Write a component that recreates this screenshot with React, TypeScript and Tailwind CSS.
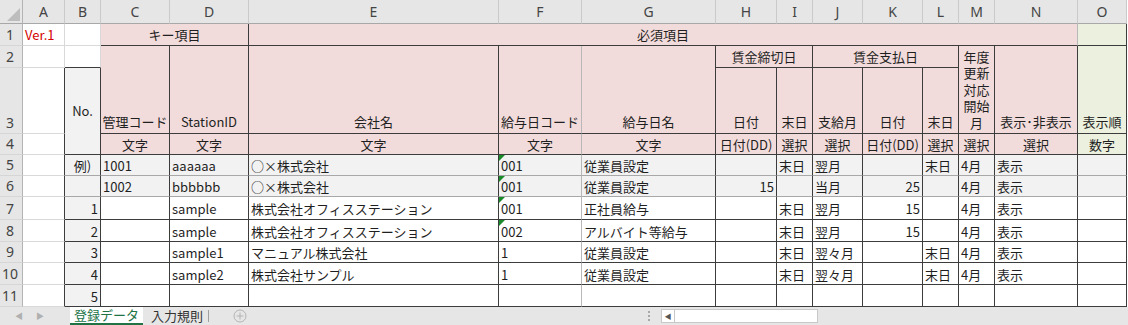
import React from "react";

// border colours: dark rule, sheet gridline, soft rule
const R = { d: "border-r-[#3c3c3c]", l: "border-r-[#d9d9d9]", g: "border-r-[#b8b8b8]" };
const B = { d: "border-b-[#3c3c3c]", l: "border-b-[#d9d9d9]", g: "border-b-[#a8a8a8]" };

type Side = "d" | "l" | "g";

function Cell({
  r = "d",
  b = "d",
  className = "",
  children,
}: {
  r?: Side;
  b?: Side;
  className?: string;
  children?: React.ReactNode;
}) {
  return (
    <div
      className={`relative flex min-w-0 overflow-hidden whitespace-nowrap border-r border-b px-[2px] text-[13px] text-[#1f1f1f] ${R[r]} ${B[b]} ${className}`}
    >
      {children}
    </div>
  );
}

const letters = ["A", "B", "C", "D", "E", "F", "G", "H", "I", "J", "K", "L", "M", "N", "O"];

// columns C..O for rows 5-11, B handled separately
const rows: { no: number; b: string; vals: string[] }[] = [
  { no: 5, b: "例)", vals: ["1001", "aaaaaa", "○×株式会社", "001", "従業員設定", "", "末日", "翌月", "", "末日", "4月", "表示", ""] },
  { no: 6, b: "", vals: ["1002", "bbbbbb", "○×株式会社", "001", "従業員設定", "15", "", "当月", "25", "", "4月", "表示", ""] },
  { no: 7, b: "1", vals: ["", "sample", "株式会社オフィスステーション", "001", "正社員給与", "", "末日", "翌月", "15", "", "4月", "表示", ""] },
  { no: 8, b: "2", vals: ["", "sample", "株式会社オフィスステーション", "002", "アルバイト等給与", "", "末日", "翌月", "15", "", "4月", "表示", ""] },
  { no: 9, b: "3", vals: ["", "sample1", "マニュアル株式会社", "1", "従業員設定", "", "末日", "翌々月", "", "末日", "4月", "表示", ""] },
  { no: 10, b: "4", vals: ["", "sample2", "株式会社サンプル", "1", "従業員設定", "", "末日", "翌々月", "", "末日", "4月", "表示", ""] },
  { no: 11, b: "5", vals: ["", "", "", "", "", "", "", "", "", "", "", "", ""] },
];

// Excel puts the row number at the bottom of a tall row
function RowHead({ n }: { n: number | string }) {
  return (
    <div className="flex items-end justify-center border-r border-b border-r-[#b4b4b4] border-b-[#d6d6d6] bg-[#e6e6e6] pr-[2px] pb-[1px] font-['Noto_Sans',sans-serif] text-[14px] leading-[19px] text-[#444]">
      {n}
    </div>
  );
}

function Flag() {
  return (
    <svg className="absolute left-0 top-0" width="6" height="6" viewBox="0 0 6 6">
      <polygon points="0,0 6,0 0,6" fill="#1b8a2a" />
    </svg>
  );
}

export default function App() {
  return (
    <div className="h-[325px] w-[1128px] overflow-hidden bg-white font-['Noto_Sans_CJK_JP','Noto_Sans',sans-serif]">
      <div className="grid grid-cols-[23px_42px_36px_69px_79px_250px_83px_134px_61px_36px_50px_60px_36px_36px_83px_49px] grid-rows-[24px_22px_22px_66px_21px_21px_21px_23px_22px_21px_22px_22px] leading-none">
        {/* column header strip */}
        <div className="relative border-r border-b border-r-[#b4b4b4] border-b-[#a8a8a8] bg-[#e6e6e6]">
          <svg className="absolute left-0 top-0" width="23" height="24" viewBox="0 0 23 24">
            <polygon points="20,8 20,21 7,21" fill="#bdbdbd" />
          </svg>
        </div>
        {letters.map((l) => (
          <div
            key={l}
            className="flex items-center justify-center border-r border-b border-r-[#cacaca] border-b-[#a8a8a8] bg-[#e6e6e6] font-['Noto_Sans',sans-serif] text-[14px] text-[#444]"
          >
            {l}
          </div>
        ))}

        {/* row 1 */}
        <RowHead n={1} />
        <Cell r="l" b="l" className="items-center text-[#d40000]">
          Ver.1
        </Cell>
        <Cell r="l" b="l" />
        <Cell className="col-span-2 items-center justify-center bg-[#f2dcdb]">キー項目</Cell>
        <Cell r="g" className="col-span-10 items-center justify-center bg-[#f2dcdb]">
          必須項目
        </Cell>
        <Cell className="bg-[#ebf1de]" />

        {/* row 2 */}
        <RowHead n={2} />
        <Cell r="l" b="l" />
        <Cell r="l" b="d" />
        <Cell className="row-span-2 items-end justify-center bg-[#f2dcdb] pb-[5px]">管理コード</Cell>
        <Cell className="row-span-2 items-end justify-center bg-[#f2dcdb] pb-[5px]">StationID</Cell>
        <Cell className="row-span-2 items-end justify-center bg-[#f2dcdb] pb-[5px]">会社名</Cell>
        <Cell r="g" className="row-span-2 items-end justify-center bg-[#f2dcdb] pb-[5px]">
          給与日コード
        </Cell>
        <Cell className="row-span-2 items-end justify-center bg-[#f2dcdb] pb-[5px]">給与日名</Cell>
        <Cell className="col-span-2 items-center justify-center bg-[#f2dcdb]">賃金締切日</Cell>
        <Cell className="col-span-3 items-center justify-center bg-[#f2dcdb]">賃金支払日</Cell>
        <Cell className="row-span-2 items-end justify-center bg-[#f2dcdb] pb-[2px]">
          <span className="block text-center leading-[16.5px] whitespace-normal">
            年度
            <br />
            更新
            <br />
            対応
            <br />
            開始
            <br />月
          </span>
        </Cell>
        <Cell className="row-span-2 items-end justify-center bg-[#f2dcdb] pb-[5px]">表示･非表示</Cell>
        <Cell className="row-span-2 items-end justify-center bg-[#ebf1de] pb-[5px]">表示順</Cell>

        {/* row 3 */}
        <RowHead n={3} />
        <Cell r="d" b="l" />
        <Cell className="row-span-2 items-center justify-center bg-[#f2f2f2] pb-[2px]">No.</Cell>
        {["日付", "末日", "支給月", "日付", "末日"].map((t, i) => (
          <Cell key={i} className="items-end justify-center bg-[#f2dcdb] pb-[5px]">
            {t}
          </Cell>
        ))}

        {/* row 4 */}
        <RowHead n={4} />
        <Cell r="d" b="l" />
        {["文字", "文字", "文字", "文字", "文字", "日付(DD)", "選択", "選択", "日付(DD)", "選択", "選択", "選択"].map(
          (t, i) => (
            <Cell key={i} r={i === 3 ? "g" : "d"} className="items-center justify-center bg-[#f2dcdb]">
              {t}
            </Cell>
          )
        )}
        <Cell className="items-center justify-center bg-[#ebf1de]">数字</Cell>

        {/* data rows */}
        {rows.map((row) => {
          const soft = row.no === 5 || row.no === 6;
          const fill = soft ? "bg-[#f2f2f2]" : "bg-white";
          const b: Side = soft ? "g" : "d";
          return (
            <React.Fragment key={row.no}>
              <RowHead n={row.no} />
              <Cell r="d" b="l" />
              <Cell
                b={b}
                className={`items-center bg-[#f2f2f2] pt-[1px] ${row.no === 5 ? "justify-center" : "justify-end"}`}
              >
                {row.b}
              </Cell>
              {row.vals.map((v, i) => (
                <Cell
                  key={i}
                  r={i === 3 ? "g" : "d"}
                  b={b}
                  className={`items-center pt-[1px] ${fill} ${i === 5 || i === 8 ? "justify-end" : "justify-start"}`}
                >
                  {i === 3 && row.no <= 8 && <Flag />}
                  {v}
                </Cell>
              ))}
            </React.Fragment>
          );
        })}
      </div>

      {/* sheet tabs */}
      <div className="relative flex h-[18px] items-center bg-[#e6e6e6] text-[13px]">
        <span className="ml-[15px] text-[8px] text-[#b0b0b0]">◀</span>
        <span className="ml-[13px] text-[8px] text-[#b0b0b0]">▶</span>
        <div className="ml-[26px] flex h-full w-[73px] items-center justify-center border-b-2 border-[#217346] bg-white text-[#217346]">
          登録データ
        </div>
        <span className="ml-[8px] text-[#333]">入力規則</span>
        <span className="ml-[5px] h-[12px] w-px bg-[#a0a0a0]" />
        <svg className="ml-[24px]" width="14" height="14" viewBox="0 0 14 14">
          <circle cx="7" cy="7" r="6" fill="none" stroke="#b4b4b4" strokeWidth="1" />
          <path d="M7 3.5v7M3.5 7h7" stroke="#b4b4b4" strokeWidth="1" />
        </svg>
        <span className="ml-[401px] flex flex-col gap-[2px]">
          <span className="h-[2px] w-[2px] bg-[#a8a8a8]" />
          <span className="h-[2px] w-[2px] bg-[#a8a8a8]" />
          <span className="h-[2px] w-[2px] bg-[#a8a8a8]" />
        </span>
        <div className="ml-[11px] flex h-[14px] w-[14px] items-center justify-center border border-[#c8c8c8] bg-white text-[7px] text-[#555]">
          ◀
        </div>
        <div className="h-[14px] w-[143px] border border-l-0 border-[#c8c8c8] bg-white" />
      </div>
    </div>
  );
}
